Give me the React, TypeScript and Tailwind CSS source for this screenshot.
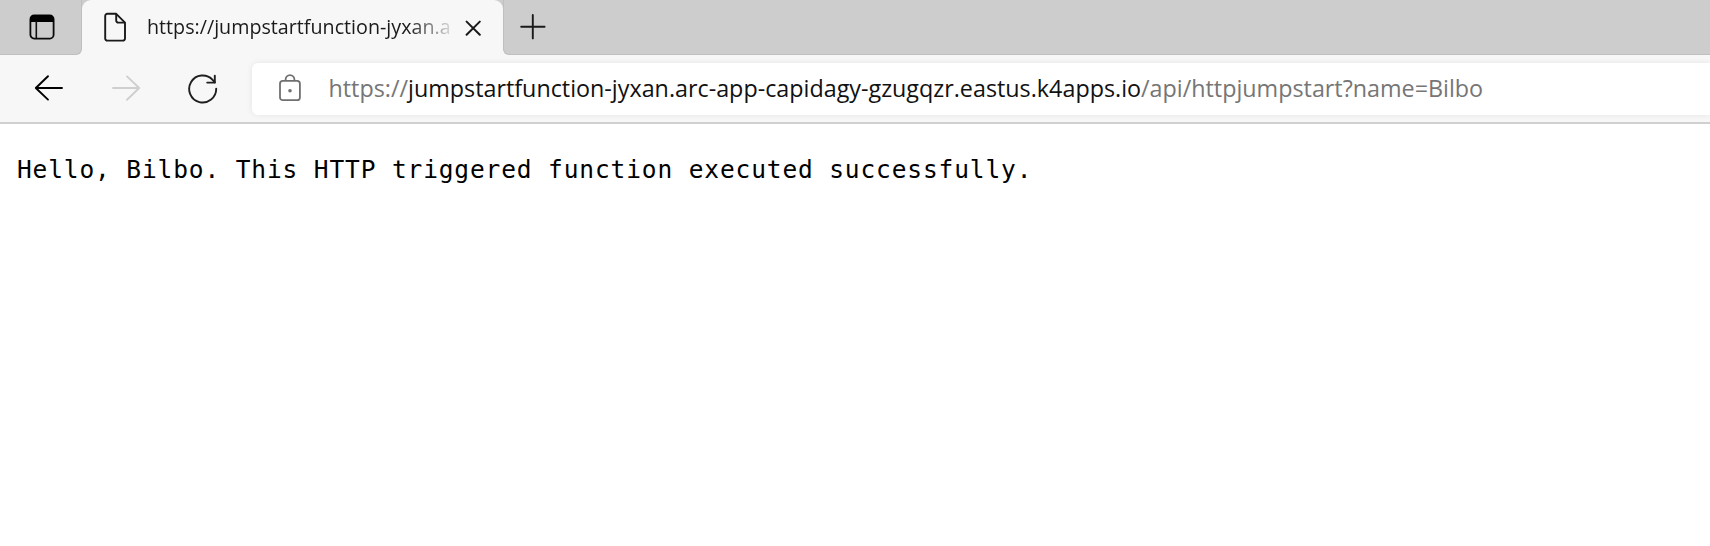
function TabActionsIcon() {
  return (
    <svg width="26" height="26" viewBox="0 0 26 26" fill="none" className="shrink-0">
      <rect x="1.4" y="1.4" width="23.2" height="23.2" rx="3.8" stroke="#0a0a0a" strokeWidth="1.8" />
      <path d="M1 8V4.8A4 4 0 0 1 5 1h15.8a4 4 0 0 1 4 3.8V8z" fill="#000" />
      <path d="M7.3 7v17.4" stroke="#111" strokeWidth="1.6" />
    </svg>
  );
}

function PageIcon() {
  return (
    <svg width="24" height="30" viewBox="0 0 24 30" fill="none" stroke="#1a1a1a" strokeWidth="1.9" strokeLinejoin="round" className="shrink-0">
      <path d="M13.2 1.8H4.4A2.2 2.2 0 0 0 2.2 4v22.4a2.2 2.2 0 0 0 2.2 2.2h15.4a2.2 2.2 0 0 0 2.2-2.2V10.6z" />
      <path d="M13.2 1.8v6.6a2.2 2.2 0 0 0 2.2 2.2H22" />
    </svg>
  );
}

function CloseIcon() {
  return (
    <svg width="16" height="16" viewBox="0 0 16 16" fill="none" stroke="#1a1a1a" strokeWidth="2" strokeLinecap="round">
      <path d="M1.6 1.6l13.2 13.2M14.8 1.6L1.6 14.8" />
    </svg>
  );
}

function PlusIcon() {
  return (
    <svg width="26" height="26" viewBox="0 0 26 26" fill="none" stroke="#1a1a1a" strokeWidth="1.9" strokeLinecap="round">
      <path d="M12.8 1v23.4M1.2 12.7h23.4" />
    </svg>
  );
}

function ArrowIcon({ flipped = false }: { flipped?: boolean }) {
  return (
    <svg width="30" height="28" viewBox="0 0 30 28" fill="none" stroke="currentColor" strokeWidth="1.9" strokeLinecap="round" strokeLinejoin="round" className={flipped ? "rotate-180" : ""}>
      <path d="M14 2.2L1.8 14 14 25.6M1.8 14h26.2" />
    </svg>
  );
}

function RefreshIcon() {
  return (
    <svg width="30" height="30" viewBox="0 0 30 30" fill="none" stroke="#1f1f1f" strokeWidth="1.9" strokeLinecap="round" strokeLinejoin="round">
      <path d="M28.2 14.6A13.5 13.5 0 1 1 24.6 5.8L26.8 8.4" />
      <path d="M26.8 1.6v7h-7.6" />
    </svg>
  );
}

function LockIcon() {
  return (
    <svg width="22" height="28" viewBox="0 0 22 28" fill="none" stroke="#707070" strokeWidth="1.8">
      <rect x="1" y="6.9" width="19.9" height="19.3" rx="2.8" />
      <path d="M6.6 6.9V5.5a4.4 4.4 0 0 1 8.8 0v1.4" />
      <circle cx="11" cy="16.7" r="1.8" fill="#707070" stroke="none" />
    </svg>
  );
}

export default function App() {
  return (
    <div className="h-[546px] w-full overflow-hidden bg-white font-['Open_Sans',sans-serif]">
      <header className="h-[124px] border-b-2 border-[#d0d0d0] bg-[#f7f7f7]">
        <div className="flex h-[55px]">
          <div className="w-[82px] shrink-0 rounded-br-[6px] border-r border-b border-[#bfbfbf] bg-[#cdcdcd] pt-3.5 pl-[29px]">
            <TabActionsIcon />
          </div>
          <div className="flex w-[421px] shrink-0 bg-[linear-gradient(#cdcdcd,#cdcdcd)] bg-[length:100%_10px] bg-no-repeat">
            <div className="flex h-[55px] w-full rounded-t-[9px] bg-[#f7f7f7]">
              <div className="ml-[21px] pt-3"><PageIcon /></div>
              <div className="ml-5 w-[304px] shrink-0 pt-[13px] text-[19.7px] leading-7 whitespace-nowrap text-[#1a1a1a] [mask-image:linear-gradient(to_right,#000_86%,transparent_102%)]">
                https://jumpstartfunction-jyxan.a
              </div>
              <div className="ml-[14px] pt-5"><CloseIcon /></div>
            </div>
          </div>
          <div className="flex-1 rounded-bl-[6px] border-b border-l border-[#bfbfbf] bg-[#cdcdcd] pt-3.5 pl-4">
            <PlusIcon />
          </div>
        </div>
        <div className="flex h-[67px] pt-2">
          <div className="flex w-[252px] shrink-0 pl-[34px]">
            <div className="pt-[11px] text-black"><ArrowIcon /></div>
            <div className="ml-[47px] pt-[11px] text-[#cfcfcf]"><ArrowIcon flipped /></div>
            <div className="ml-[47px] pt-[11px]"><RefreshIcon /></div>
          </div>
          <div className="flex h-[52px] flex-1 rounded-l-[6px] bg-white shadow-[0_0_6px_rgba(0,0,0,0.08)]">
            <div className="pt-[11px] pl-[27px]"><LockIcon /></div>
            <div className="ml-[27.5px] pt-[9px] text-[23.32px] leading-8 whitespace-nowrap text-[#767676]">
              https://<span className="text-[#111]">jumpstartfunction-jyxan.arc-app-capidagy-gzugqzr.eastus.k4apps.io</span>/api/httpjumpstart?name=Bilbo
            </div>
          </div>
        </div>
      </header>
      <pre className="pt-[30px] pl-[17px] font-['DejaVu_Sans_Mono',monospace] text-[24.5px] leading-8 tracking-[0.87px] text-black">
        Hello, Bilbo. This HTTP triggered function executed successfully.
      </pre>
    </div>
  );
}
